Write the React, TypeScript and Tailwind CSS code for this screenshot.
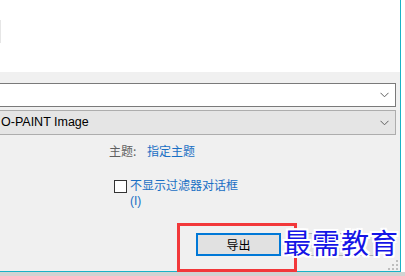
import React from "react";

const cjk = { fontFamily: '"Noto Sans CJK SC", "Noto Sans", sans-serif' };
const latin = { fontFamily: '"Liberation Sans", Arial, sans-serif' };

function Chevron() {
  return (
    <svg width="9" height="6" viewBox="0 0 9 6" className="block">
      <path d="M0.5 0.8 L4.5 4.8 L8.5 0.8" fill="none" stroke="#606060" strokeWidth="1" />
    </svg>
  );
}

function Grip() {
  const dots = [
    [8, 0],
    [4, 4],
    [8, 4],
    [0, 8],
    [4, 8],
    [8, 8],
  ];
  return (
    <svg width="10" height="10" viewBox="0 0 10 10" className="block">
      {dots.map(([x, y], i) => (
        <rect key={i} x={x} y={y} width="2" height="2" fill="#bdbdbd" />
      ))}
    </svg>
  );
}

export default function App() {
  return (
    <div className="w-[405px] h-[276px] overflow-hidden bg-white flex flex-col">
      <div className="flex h-[272px]">
        <div className="relative w-[401px] h-[272px] bg-[#f0f0f0] border-r border-b border-[#19b2c6] flex flex-col">
          <div className="h-[72px] bg-white flex">
            <div className="mt-[20px] w-px h-[23px] bg-[#e6e6e6]" />
          </div>
          <div className="flex flex-col pt-[11px] pr-[4px]">
            <div className="h-[24px] -ml-[2px] border border-[#7a7a7a] bg-white flex items-center justify-end pr-[6px]">
              <Chevron />
            </div>
            <div className="mt-[3px] h-[25px] -ml-[2px] border border-[#adadad] bg-[#e5e5e5] flex items-center justify-between pl-[2px] pr-[6px]">
              <span className="text-[12.5px] leading-none text-black" style={latin}>
                O-PAINT Image
              </span>
              <Chevron />
            </div>
            <div className="mt-[7px] h-[17px] pl-[109px] flex items-center text-[12px] leading-[17px]" style={cjk}>
              <span className="text-[#5f5f5f] w-[38px]">主题:</span>
              <span className="text-[#1a6fc4]">指定主题</span>
            </div>
            <div className="mt-[17px] pl-[114px] flex items-start">
              <div className="mt-[4px] w-[13px] h-[13px] border border-[#333333] bg-white" />
              <div className="ml-[3px] flex flex-col text-[12px] leading-[17px] text-[#1a6fc4]" style={cjk}>
                <span>不显示过滤器对话框</span>
                <span style={latin}>(I)</span>
              </div>
            </div>
            <div className="mt-[23px] pl-[196px] flex">
              <div className="w-[85px] h-[23px] border-2 border-[#0078d7] bg-[#e1e1e1] flex items-center justify-center text-[12px] text-black" style={cjk}>
                导出
              </div>
              <div className="ml-[7px] w-[90px] h-[23px] border border-[#adadad] bg-[#e1e1e1]" />
            </div>
          </div>

          <div className="absolute right-[2px] bottom-[1px]">
            <Grip />
          </div>

          <div className="absolute left-[177px] top-[223px] w-[120px] h-[49px] border-[3px] border-[#f2383a]" />

          <div
            className="absolute left-[283px] top-[222px] text-[28px] leading-[40px] text-[#1414e6] tracking-[1px]"
            style={{
              fontFamily: '"Noto Sans CJK SC", serif',
              textShadow:
                "2px 0 0 #fff, -2px 0 0 #fff, 0 2px 0 #fff, 0 -2px 0 #fff, 2px 2px 0 #fff, -2px -2px 0 #fff, 2px -2px 0 #fff, -2px 2px 0 #fff",
            }}
          >
            最需教育
          </div>
        </div>
        <div className="flex-1 bg-white" />
      </div>
      <div className="flex-1 bg-[#d2d2d2]" />
    </div>
  );
}
